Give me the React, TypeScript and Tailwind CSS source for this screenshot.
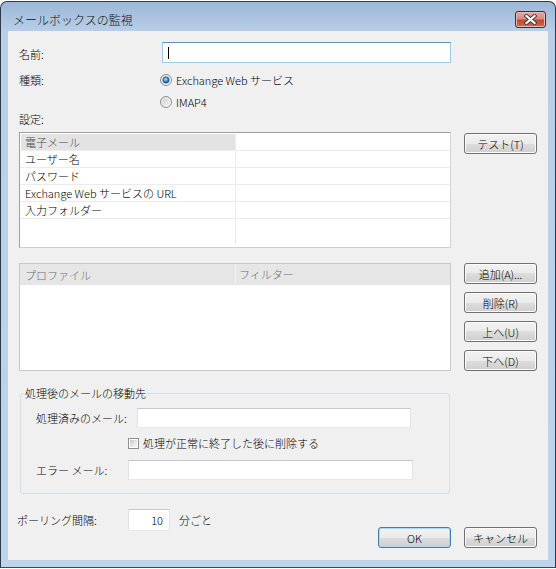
import React from "react";

const settingRows = [
  "電子メール",
  "ユーザー名",
  "パスワード",
  "Exchange Web サービスの URL",
  "入力フォルダー",
];

function WinButton({ label, primary }: { label: string; primary?: boolean }) {
  return (
    <button
      className={`flex h-[21px] w-[73px] shrink-0 items-center justify-center rounded-[3px] border bg-[linear-gradient(to_bottom,#f2f2f2_0%,#ebebeb_50%,#dddddd_50%,#cfcfcf_100%)] text-[11px] leading-[16px] text-black ${
        primary
          ? "border-[#3c7fb1] shadow-[inset_0_0_0_1px_#a7d9f5]"
          : "border-[#707070] shadow-[inset_0_0_0_1px_#fbfbfb]"
      }`}
    >
      {label}
    </button>
  );
}

function Radio({ id, checked }: { id: string; checked?: boolean }) {
  return (
    <svg width="12" height="12" viewBox="0 0 12 12" className="shrink-0">
      <defs>
        <linearGradient id={`${id}-f`} x1="0" y1="0" x2="1" y2="1">
          <stop offset="0" stopColor="#c9c9c9" />
          <stop offset="1" stopColor="#fafafa" />
        </linearGradient>
        <radialGradient id={`${id}-d`} cx="0.45" cy="0.4" r="0.65">
          <stop offset="0" stopColor="#c4ecff" />
          <stop offset="0.45" stopColor="#3a92d6" />
          <stop offset="1" stopColor="#0c3f78" />
        </radialGradient>
      </defs>
      <circle cx="6" cy="6" r="5.5" fill={`url(#${id}-f)`} stroke="#8a8b8c" />
      <circle cx="6" cy="6" r="4.2" fill="none" stroke="#f4f4f4" strokeWidth="0.8" />
      {checked && <circle cx="6" cy="6" r="3.2" fill={`url(#${id}-d)`} stroke="#1f4f82" strokeWidth="0.5" />}
    </svg>
  );
}

function CheckBox() {
  return (
    <div className="flex h-[11px] w-[11px] shrink-0 items-center justify-center border border-[#8e8f8f] bg-white">
      <div className="h-[7px] w-[7px] bg-[linear-gradient(135deg,#c4c8ce_0%,#e6e8ea_60%,#f6f6f6_100%)]" />
    </div>
  );
}

export default function App() {
  return (
    <div className="h-[569px] w-[556px] bg-white pt-[1px] font-['Noto_Sans_CJK_JP','Noto_Sans_CJK_SC',sans-serif] text-[11px] font-light leading-[16px] text-black">
      <div className="flex h-[567px] w-[556px] flex-col rounded-t-[7px] border border-[#2e3a46] border-b-[#2b4d66] bg-[linear-gradient(to_bottom,#9cb7d7_0px,#b9cfe8_30px,#bed4ed_100%)] px-[7px] pb-[7px]">
        {/* title bar */}
        <div className="flex h-[29px] shrink-0 items-start justify-between pl-[5px] pr-[2px]">
          <span className="mt-[10px] text-[12px] leading-[16px] text-[#111]">メールボックスの監視</span>
          <div className="mt-[9px] flex h-[17px] w-[31px] items-center justify-center rounded-[3px] border border-[#5a2420] bg-[linear-gradient(to_bottom,#e4aba1_0%,#d68b7f_45%,#c2472f_55%,#cf6a55_100%)] shadow-[inset_0_0_0_1px_#eab9b0]">
            <svg width="13" height="11" viewBox="0 0 13 11">
              <path d="M2.5 2 L10.5 9 M10.5 2 L2.5 9" stroke="#3b3b3b" strokeWidth="4" strokeLinecap="square" />
              <path d="M2.5 2 L10.5 9 M10.5 2 L2.5 9" stroke="#ffffff" strokeWidth="2.2" strokeLinecap="square" />
            </svg>
          </div>
        </div>

        {/* client area */}
        <div className="flex flex-1 flex-col bg-[#f0f0f0] px-[11px] pt-[11px]">
          <div className="flex h-[21px] items-center">
            <span className="w-[143px] pt-[2px]">名前:</span>
            <div className="flex h-[21px] w-[289px] items-center border border-[#a4c9e3] border-t-[#5d92c4] bg-white pl-[5px]">
              <div className="h-[12px] w-[1px] bg-black" />
            </div>
          </div>

          <div className="mt-[9px] flex h-[16px] items-center">
            <span className="w-[141px]">種類:</span>
            <Radio id="r1" checked />
            <span className="ml-[4px]">Exchange Web サービス</span>
          </div>
          <div className="mt-[6px] flex h-[16px] items-center pl-[141px]">
            <Radio id="r2" />
            <span className="ml-[4px]">IMAP4</span>
          </div>
          <div className="mt-[1px] h-[16px]">設定:</div>

          {/* settings grid */}
          <div className="mt-[5px] flex items-start gap-[13px]">
            <div className="flex h-[116px] w-[432px] flex-col border border-[#a0a0a0] border-r-[#d4d4d4] border-b-[#cfcfcf] bg-white pt-[1px]">
              {settingRows.map((row, i) => (
                <div key={row} className="flex h-[17px] shrink-0 border-b border-[#ececec]">
                  <div className={`w-[214px] pl-[4px] leading-[17px] ${i === 0 ? "ml-[1px] bg-[#e3e3e3] text-[#4a4a4a]" : "ml-[1px]"}`}>{row}</div>
                  <div className="flex-1 border-l border-[#ececec]" />
                </div>
              ))}
              <div className="flex flex-1">
                <div className="w-[215px]" />
                <div className="mb-[2px] flex-1 border-l border-[#ececec]" />
              </div>
            </div>
            <div className="mt-[1px]">
              <WinButton label="テスト(T)" />
            </div>
          </div>

          {/* profile list */}
          <div className="mt-[15px] flex items-start gap-[13px]">
            <div className="flex h-[108px] w-[432px] flex-col border border-[#c8c8c8] bg-white">
              <div className="flex h-[21px] shrink-0 items-center bg-[#e6e6e6] text-[#6d6d6d]">
                <div className="w-[215px] pl-[5px]">プロファイル</div>
                <div className="h-full border-l border-[#f4f4f4] pl-[3px] leading-[21px]">フィルター</div>
              </div>
            </div>
            <div className="flex flex-col gap-[8px]">
              <WinButton label="追加(A)..." />
              <WinButton label="削除(R)" />
              <WinButton label="上へ(U)" />
              <WinButton label="下へ(D)" />
            </div>
          </div>

          {/* group box */}
          <fieldset className="mt-[14px] ml-[1px] w-[430px] rounded-[3px] border border-[#d5dfe5] pb-[13px]">
            <legend className="ml-[3px] px-[1px] leading-[16px]">処理後のメールの移動先</legend>
            <div className="mt-[7px] flex h-[20px] items-center pl-[15px]">
              <span className="w-[101px]">処理済みのメール:</span>
              <div className="h-[20px] w-[274px] border border-[#e2e3ea] border-t-[#c5c8d0] border-b-[#e3e9ef] bg-white" />
            </div>
            <div className="mt-[7px] flex h-[16px] items-center pl-[107px]">
              <CheckBox />
              <span className="ml-[4px]">処理が正常に終了した後に削除する</span>
            </div>
            <div className="mt-[9px] flex h-[20px] items-center pl-[15px]">
              <span className="w-[92px]">エラー メール:</span>
              <div className="h-[20px] w-[285px] border border-[#e2e3ea] border-t-[#c5c8d0] border-b-[#e3e9ef] bg-white" />
            </div>
          </fieldset>

          {/* polling + dialog buttons */}
          <div className="mt-[15px] flex items-start">
            <div className="-ml-[2px] flex h-[22px] items-center">
              <span className="w-[111px]">ポーリング間隔:</span>
              <div className="flex h-[22px] w-[42px] items-center justify-end border border-[#e2e3ea] border-t-[#c5c8d0] border-b-[#e3e9ef] bg-white pr-[6px]">
                10
              </div>
              <span className="ml-[9px]">分ごと</span>
            </div>
            <div className="ml-auto mt-[18px] flex gap-[13px]">
              <WinButton label="OK" primary />
              <WinButton label="キャンセル" />
            </div>
          </div>
        </div>
      </div>
    </div>
  );
}
